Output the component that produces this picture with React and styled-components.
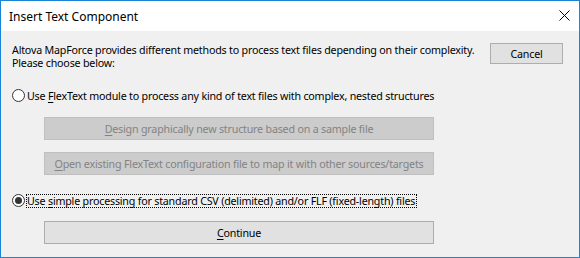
import React from "react";
import styled, { createGlobalStyle } from "styled-components";

const Global = createGlobalStyle`
  html, body { margin: 0; padding: 0; background: #ffffff; }
  body { font-family: "Noto Sans", "Open Sans", sans-serif; }
  * { box-sizing: border-box; }
`;

const Window = styled.div`
  width: 580px;
  height: 258px;
  border: 1px solid #1883d7;
  background: #f0f0f0;
  display: flex;
  flex-direction: column;
  font-size: 10.7px;
  letter-spacing: -0.2px;
  color: #000;
`;

const TitleBar = styled.div`
  height: 30px;
  background: #ffffff;
  display: flex;
  align-items: center;
  justify-content: space-between;
  padding: 0 9px 0 8px;
  font-size: 12px;
  letter-spacing: 0;
`;

const CloseIcon = styled.svg`
  width: 11px;
  height: 11px;
  display: block;
  margin-bottom: 1px;
`;

const Body = styled.div`
  flex: 1;
  padding: 12px 16px 0 11px;
  display: flex;
  flex-direction: column;
`;

const TopRow = styled.div`
  display: flex;
  justify-content: space-between;
  align-items: flex-start;
`;

const Description = styled.p`
  margin: 0;
  line-height: 13px;
  padding-top: 1px;
  white-space: nowrap;
`;

const Button = styled.button`
  font: inherit;
  letter-spacing: inherit;
  height: ${(p) => p.$h || 23}px;
  width: ${(p) => (p.$w ? `${p.$w}px` : "390px")};
  background: ${(p) => (p.disabled ? "#cccccc" : "#e1e1e1")};
  border: 1px solid ${(p) => (p.disabled ? "#bfbfbf" : "#adadad")};
  color: ${(p) => (p.disabled ? "#838383" : "#000")};
  padding: 0;
  margin: 0;
  display: flex;
  align-items: center;
  justify-content: center;
  white-space: nowrap;
`;

const RadioRow = styled.label`
  display: flex;
  align-items: center;
  gap: 1px;
  margin-top: ${(p) => p.$mt}px;
  height: 15px;
  white-space: nowrap;
`;

const RadioCircle = styled.span`
  width: 13px;
  height: 13px;
  border-radius: 50%;
  border: 1px solid #333333;
  background: #ffffff;
  display: flex;
  align-items: center;
  justify-content: center;
  flex: none;
  &::after {
    content: "";
    width: 7px;
    height: 7px;
    border-radius: 50%;
    background: ${(p) => (p.$checked ? "#333333" : "transparent")};
  }
`;

const RadioLabel = styled.span`
  padding: 0 1px 0 0;
  line-height: 12px;
  border: 1px ${(p) => (p.$focus ? "dotted #000" : "solid transparent")};
`;

const Indented = styled.div`
  padding-left: 32px;
  margin-top: ${(p) => p.$mt}px;
`;

const Key = styled.u`
  text-decoration: underline;
  text-underline-offset: 2px;
`;

export default function App() {
  return (
    <>
      <Global />
      <Window>
        <TitleBar>
          <span>Insert Text Component</span>
          <CloseIcon viewBox="0 0 11 11">
            <path d="M0.5 0.5 L10.5 10.5 M10.5 0.5 L0.5 10.5" stroke="#000" strokeWidth="1" />
          </CloseIcon>
        </TitleBar>
        <Body>
          <TopRow>
            <Description>
              Altova MapForce provides different methods to process text files depending on their complexity.
              <br />
              Please choose below:
            </Description>
            <Button $w={73} $h={21}>Cancel</Button>
          </TopRow>
          <RadioRow $mt={18}>
            <RadioCircle />
            <RadioLabel>
              Use <Key>F</Key>lexText module to process any kind of text files with complex, nested structures
            </RadioLabel>
          </RadioRow>
          <Indented $mt={14}>
            <Button disabled>
              <span><Key>D</Key>esign graphically new structure based on a sample file</span>
            </Button>
          </Indented>
          <Indented $mt={12}>
            <Button disabled>
              <span><Key>O</Key>pen existing FlexText configuration file to map it with other sources/targets</span>
            </Button>
          </Indented>
          <RadioRow $mt={18}>
            <RadioCircle $checked />
            <RadioLabel $focus>
              Use <Key>s</Key>imple processing for standard CSV (delimited) and/or FLF (fixed-length) files
            </RadioLabel>
          </RadioRow>
          <Indented $mt={13}>
            <Button>
              <span><Key>C</Key>ontinue</span>
            </Button>
          </Indented>
        </Body>
      </Window>
    </>
  );
}
